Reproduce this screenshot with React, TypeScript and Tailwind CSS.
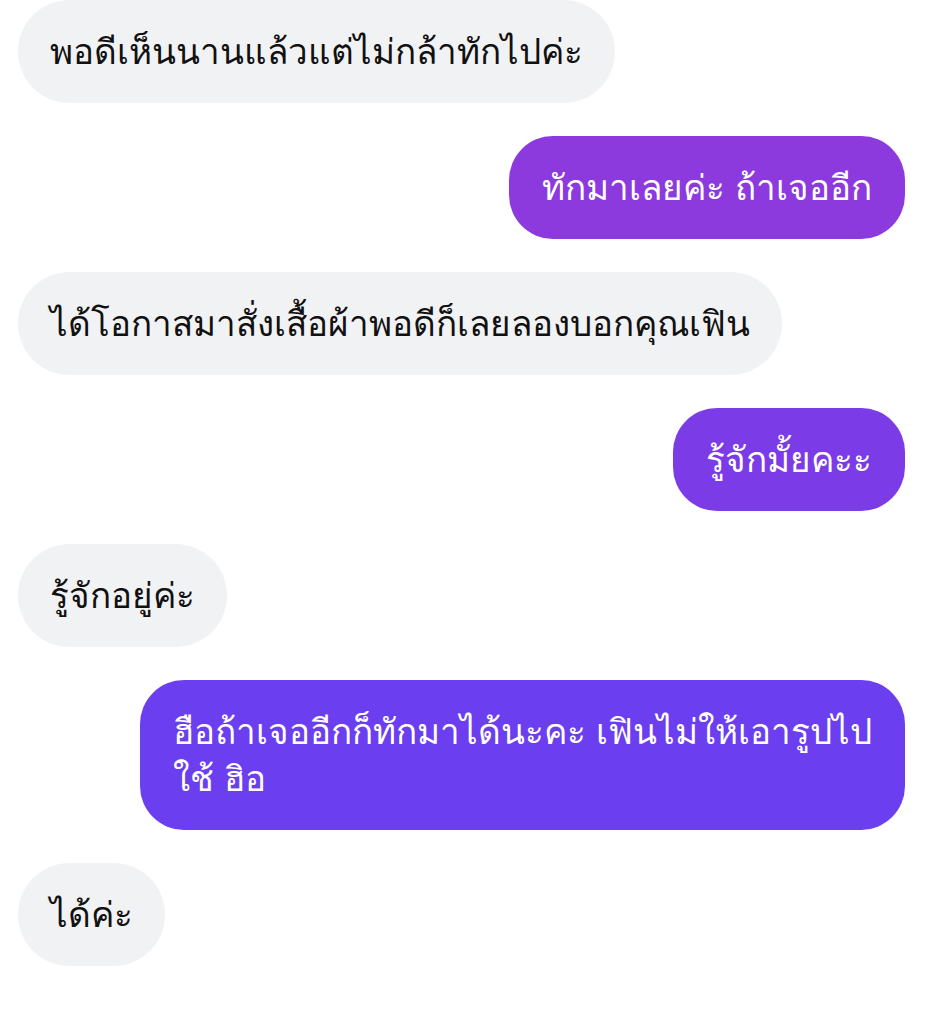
type Message = {
  lines: string[];
  mine?: boolean;
  tone?: string;
};

const messages: Message[] = [
  { lines: ["พอดีเห็นนานแล้วแต่ไม่กล้าทักไปค่ะ"] },
  { lines: ["ทักมาเลยค่ะ ถ้าเจออีก"], mine: true, tone: "bg-[#8c39de]" },
  { lines: ["ได้โอกาสมาสั่งเสื้อผ้าพอดีก็เลยลองบอกคุณเฟิน"] },
  { lines: ["รู้จักมั้ยคะะ"], mine: true, tone: "bg-[#7b3be6]" },
  { lines: ["รู้จักอยู่ค่ะ"] },
  {
    lines: ["ฮือถ้าเจออีกก็ทักมาได้นะคะ เฟินไม่ให้เอารูปไป", "ใช้ ฮิอ"],
    mine: true,
    tone: "bg-[#6b3eef]",
  },
  { lines: ["ได้ค่ะ"] },
];

export default function App() {
  return (
    <div
      className="min-h-screen w-[925px] bg-white px-[18px]"
      style={{ fontFamily: '"Liberation Sans", sans-serif' }}
    >
      <div className="flex flex-col gap-[33px]">
        {messages.map((m, i) => (
          <div key={i} className={m.mine ? "flex justify-end pr-[2px]" : "flex justify-start"}>
            <p
              className={
                m.mine
                  ? `whitespace-nowrap rounded-[44px] px-[33px] py-[28px] text-[35px] leading-[47px] text-white ${m.tone}`
                  : "whitespace-nowrap rounded-[52px] bg-[#f1f2f4] px-[32px] py-[28px] text-[35px] leading-[47px] text-[#111111]"
              }
            >
              {m.lines.map((line, j) => (
                <span key={j} className="block">
                  {line}
                </span>
              ))}
            </p>
          </div>
        ))}
      </div>
    </div>
  );
}
